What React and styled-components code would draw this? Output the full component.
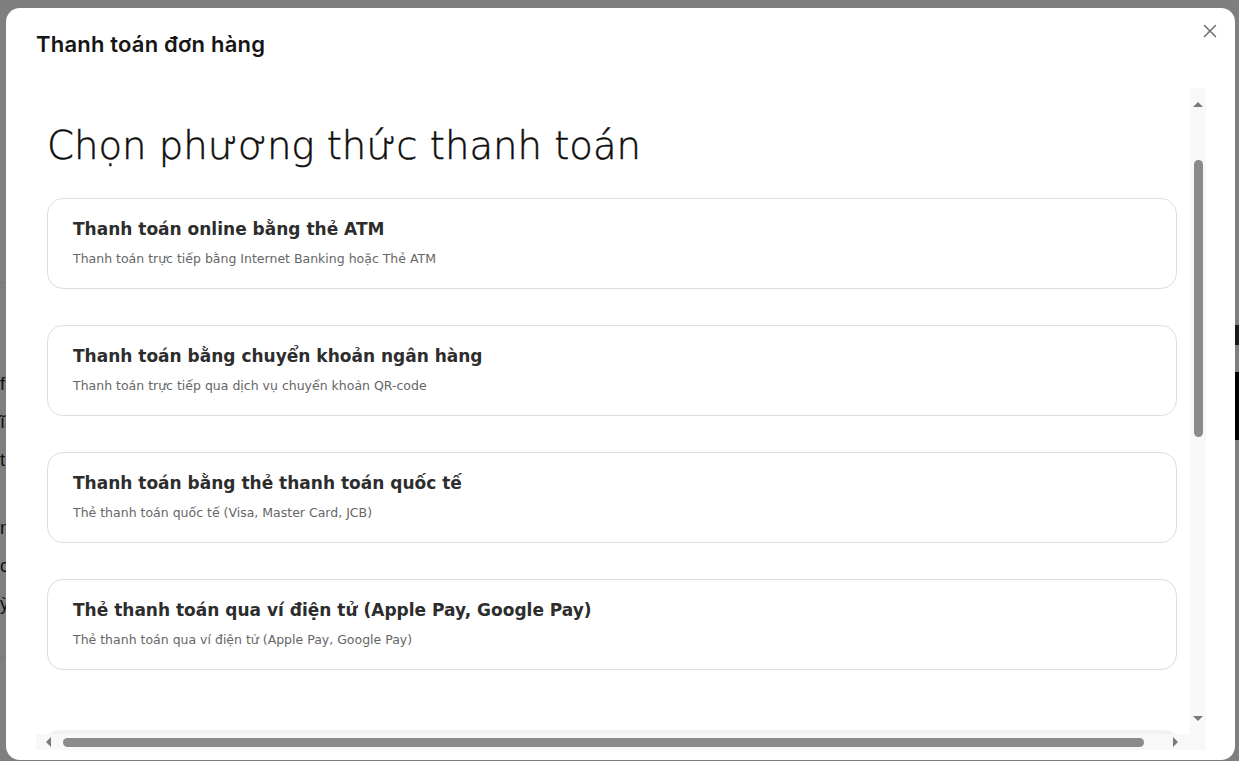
import React, { useLayoutEffect, useRef } from 'react';
import styled, { createGlobalStyle } from 'styled-components';

const GlobalStyle = createGlobalStyle`
  *, *::before, *::after {
    box-sizing: border-box;
  }
  html, body {
    margin: 0;
    padding: 0;
  }
  body {
    font-family: "DejaVu Sans", sans-serif;
    background: #fff;
    overflow: hidden;
  }
`;

// scroll metrics of the method list (px)
const VIEW_H = 646;
const CONTENT_H = 1357;
const SCROLL_TOP = 93;
const V_TRACK = 582;
const V_THUMB = Math.round((V_TRACK * VIEW_H) / CONTENT_H);
const V_OFFSET = Math.round((SCROLL_TOP / (CONTENT_H - VIEW_H)) * (V_TRACK - V_THUMB));

const Page = styled.div`
  height: 761px;
  display: flex;
  flex-direction: column;
`;

const PageTop = styled.div`
  height: 283px;
  border-bottom: 1px solid #eee;
`;

const PageBody = styled.div`
  flex: 1;
  display: grid;
  grid-template-columns: 1fr 250px;
`;

const PageText = styled.div`
  padding-top: 82px;
  display: flex;
  flex-direction: column;
  gap: 30px;
  font-family: "Liberation Sans", sans-serif;
  font-size: 18px;
  color: #222;
  border-bottom: 1px solid #eee;
  height: 375px;
`;

const PageLine = styled.div`
  line-height: 38px;
`;

const PageAside = styled.div`
  padding-top: 42px;
  display: flex;
  flex-direction: column;
  gap: 27px;
`;

const AsideLabel = styled.div`
  height: 20px;
  background: #333;
`;

const AsideImage = styled.div`
  height: 68px;
  background: #000;
`;

const Overlay = styled.div`
  position: fixed;
  inset: 0;
  background: rgba(0, 0, 0, 0.5);
  display: flex;
  align-items: flex-start;
  padding: 8px 4px 0 6px;
`;

const Modal = styled.div`
  position: relative;
  flex: 1;
  min-width: 0;
  height: 752px;
  background: #fff;
  border-radius: 14px;
  display: flex;
  flex-direction: column;
  padding: 22px 29px 10px 30px;
`;

const Title = styled.h2`
  margin: 0;
  font-family: Inter, "Noto Sans", sans-serif;
  font-weight: 600;
  font-size: 22px;
  letter-spacing: 0.2px;
  line-height: 28px;
  color: #161616;
`;

const CloseButton = styled.button`
  position: absolute;
  top: 16px;
  right: 18px;
  width: 14px;
  height: 14px;
  padding: 0;
  border: none;
  background: none;
  color: #6b6b6b;
  cursor: pointer;
  display: flex;

  svg {
    width: 14px;
    height: 14px;
  }
`;

const ScrollArea = styled.div`
  margin-top: 30px;
  display: grid;
  grid-template-columns: minmax(0, 1fr) 16px;
  grid-template-rows: ${VIEW_H}px 16px;
`;

const Viewport = styled.div`
  overflow: hidden;
  background: #fff;
`;

const Inner = styled.div`
  padding: 127px 13px 42px 11px;
`;

const Heading = styled.h1`
  margin: 0 0 28px;
  font-family: "DejaVu Sans", sans-serif;
  font-weight: 300;
  font-size: 38.6px;
  line-height: 48px;
  color: #0d0d0d;
  -webkit-text-stroke: 0.45px #0d0d0d;
`;

const MethodList = styled.div`
  display: flex;
  flex-direction: column;
  gap: 36px;
`;

const MethodCard = styled.div`
  border: 1px solid #dedede;
  border-radius: 16px;
  padding: 18px 24px 21px 25px;
  cursor: pointer;
`;

const MethodTitle = styled.div`
  font-weight: 700;
  font-size: 17px;
  line-height: 24px;
  color: #2d2d2d;
`;

const MethodDesc = styled.div`
  margin-top: 10px;
  font-size: 12.5px;
  line-height: 16px;
  color: #666;
`;

const Summary = styled.div`
  margin-top: 60px;
  height: 580px;
  border-radius: 12px;
  background: #f0f2f4;
`;

const Bar = styled.div`
  display: flex;
  flex-direction: ${({ $vertical }) => ($vertical ? 'column' : 'row')};
  background: #f8f8f8;
`;

const Corner = styled.div`
  background: #f8f8f8;
`;

const ArrowButton = styled.div`
  flex: 0 0 ${({ $size }) => $size}px;
  display: flex;
  align-items: center;
  justify-content: center;
  color: #7a7a7a;
`;

const Track = styled.div`
  flex: 1;
  display: flex;
  flex-direction: ${({ $vertical }) => ($vertical ? 'column' : 'row')};
  align-items: center;
`;

const Thumb = styled.div`
  flex: none;
  background: #8b8b8b;
  border-radius: 5px;
  width: ${({ $vertical }) => ($vertical ? '9px' : 'auto')};
  height: ${({ $vertical }) => ($vertical ? 'auto' : '9px')};
`;

const Triangle = ({ dir }) => {
  const pts = {
    up: '0,5 5,0 10,5',
    down: '0,0 10,0 5,5',
    left: '5,0 5,10 0,5',
    right: '0,0 5,5 0,10',
  }[dir];
  const vertical = dir === 'up' || dir === 'down';
  return (
    <svg width={vertical ? 10 : 5} height={vertical ? 5 : 10} fill="currentColor">
      <polygon points={pts} />
    </svg>
  );
};

const methods = [
  {
    title: 'Thanh toán online bằng thẻ ATM',
    desc: 'Thanh toán trực tiếp bằng Internet Banking hoặc Thẻ ATM',
  },
  {
    title: 'Thanh toán bằng chuyển khoản ngân hàng',
    desc: 'Thanh toán trực tiếp qua dịch vụ chuyển khoản QR-code',
  },
  {
    title: 'Thanh toán bằng thẻ thanh toán quốc tế',
    desc: 'Thẻ thanh toán quốc tế (Visa, Master Card, JCB)',
  },
  {
    title: 'Thẻ thanh toán qua ví điện tử (Apple Pay, Google Pay)',
    desc: 'Thẻ thanh toán qua ví điện tử (Apple Pay, Google Pay)',
  },
];

const App = () => {
  const viewRef = useRef(null);

  useLayoutEffect(() => {
    if (viewRef.current) viewRef.current.scrollTop = SCROLL_TOP;
  }, []);

  return (
    <>
      <GlobalStyle />
      <Page>
        <PageTop />
        <PageBody>
          <PageText>
            <div>
              <PageLine>fi</PageLine>
              <PageLine>ĩi</PageLine>
              <PageLine>t</PageLine>
            </div>
            <div>
              <PageLine>n</PageLine>
              <PageLine>c</PageLine>
              <PageLine>ỳ</PageLine>
            </div>
          </PageText>
          <PageAside>
            <AsideLabel />
            <AsideImage />
          </PageAside>
        </PageBody>
      </Page>

      <Overlay>
        <Modal>
          <Title>Thanh toán đơn hàng</Title>
          <CloseButton aria-label="Đóng">
            <svg viewBox="0 0 14 14" fill="none" stroke="currentColor" strokeWidth="1.5" strokeLinecap="round">
              <path d="M1.5 1.5l11 11M12.5 1.5l-11 11" />
            </svg>
          </CloseButton>

          <ScrollArea>
            <Viewport ref={viewRef}>
              <Inner>
                <Heading>Chọn phương thức thanh toán</Heading>
                <MethodList>
                  {methods.map((m) => (
                    <MethodCard key={m.title}>
                      <MethodTitle>{m.title}</MethodTitle>
                      <MethodDesc>{m.desc}</MethodDesc>
                    </MethodCard>
                  ))}
                </MethodList>
                <Summary />
              </Inner>
            </Viewport>

            <Bar $vertical>
              <ArrowButton $size={32}><Triangle dir="up" /></ArrowButton>
              <Track $vertical>
                <Thumb $vertical style={{ marginTop: V_OFFSET, height: V_THUMB }} />
              </Track>
              <ArrowButton $size={32}><Triangle dir="down" /></ArrowButton>
            </Bar>

            <Bar>
              <ArrowButton $size={24}><Triangle dir="left" /></ArrowButton>
              <Track>
                <Thumb style={{ marginLeft: 3, width: 1081 }} />
              </Track>
              <ArrowButton $size={30}><Triangle dir="right" /></ArrowButton>
            </Bar>
            <Corner />
          </ScrollArea>
        </Modal>
      </Overlay>
    </>
  );
};

export default App;
